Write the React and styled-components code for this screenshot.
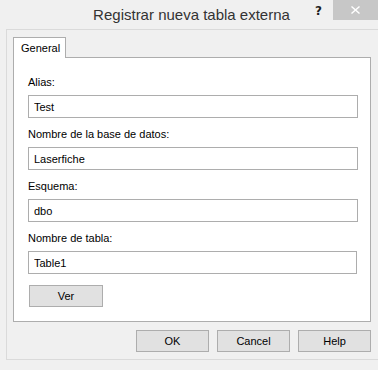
import React, { useState } from 'react';
import styled, { createGlobalStyle } from 'styled-components';

const GlobalStyle = createGlobalStyle`
  html, body {
    margin: 0;
    padding: 0;
    background: #f0f0f0;
  }
  * {
    box-sizing: border-box;
  }
`;

const Window = styled.div`
  width: 378px;
  height: 370px;
  overflow: hidden;
  background: #f0f0f0;
  font-family: "Liberation Sans", Arial, sans-serif;
  font-size: 11px;
  color: #000;
`;

const TitleBar = styled.div`
  height: 29px;
  display: flex;
  align-items: flex-start;
`;

const Title = styled.div`
  flex: 1;
  padding-left: 80px;
  padding-top: 6px;
  text-align: center;
  font-size: 15px;
  line-height: 18px;
  color: #333;
`;

const HelpGlyph = styled.div`
  width: 30px;
  padding: 4px 0 0 12px;
  font-family: "DejaVu Sans", sans-serif;
  font-weight: bold;
  font-size: 12px;
  line-height: 14px;
  color: #1e1e1e;
`;

const CloseButton = styled.div`
  width: 45px;
  height: 20px;
  background: #c7c7c7;
  display: flex;
  align-items: center;
  justify-content: center;
`;

const Frame = styled.div`
  width: 373px;
  height: 331px;
  margin-left: 6px;
  border-top: 1px solid #dadada;
  border-left: 1px solid #dadada;
  border-bottom: 1px solid #dadada;
  padding: 7px 8px 0 6px;
  display: flex;
  flex-direction: column;
`;

const TabStrip = styled.div`
  display: flex;
`;

const Tab = styled.div`
  position: relative;
  z-index: 1;
  width: 53px;
  height: 21px;
  margin-bottom: -1px;
  background: #fff;
  border: 1px solid #adadad;
  border-bottom: none;
  padding: 3px 0 0 7px;
  line-height: 14px;
`;

const Panel = styled.div`
  width: 358px;
  height: 265px;
  background: #fff;
  border: 1px solid #adadad;
  padding: 17px 12px 0 14px;
  display: flex;
  flex-direction: column;
`;

const Field = styled.div`
  display: flex;
  flex-direction: column;
  gap: 5px;
  margin-bottom: 9px;
`;

const Label = styled.label`
  line-height: 15px;
`;

const Input = styled.input`
  width: ${p => p.$width || 330}px;
  height: 23px;
  border: 1px solid #adadad;
  padding: 0 0 0 5px;
  font-family: "Liberation Sans", Arial, sans-serif;
  font-size: 11px;
  color: #000;
  outline: none;
  background: #fff;
`;

const Button = styled.button`
  width: ${p => p.$width || 73}px;
  height: 22px;
  background: #e1e1e1;
  border: 1px solid #adadad;
  font-family: "Liberation Sans", Arial, sans-serif;
  font-size: 11px;
  color: #000;
  padding: 0;
`;

const VerButton = styled(Button)`
  margin: 2px 0 0 1px;
`;

const ButtonRow = styled.div`
  display: flex;
  justify-content: flex-end;
  gap: 8px;
  width: 358px;
  margin-top: 8px;
`;

const fields = [
  { label: 'Alias:', value: 'Test' },
  { label: 'Nombre de la base de datos:', value: 'Laserfiche' },
  { label: 'Esquema:', value: 'dbo' },
  { label: 'Nombre de tabla:', value: 'Table1', width: 329 },
];

const App = () => {
  const [values, setValues] = useState(fields.map(f => f.value));

  return (
    <Window>
      <GlobalStyle />
      <TitleBar>
        <Title>Registrar nueva tabla externa</Title>
        <HelpGlyph>?</HelpGlyph>
        <CloseButton>
          <svg width="9" height="8" viewBox="0 0 9 8">
            <path d="M0.5 0.5 L8.5 7.5 M8.5 0.5 L0.5 7.5" stroke="#fff" strokeWidth="1.4" />
          </svg>
        </CloseButton>
      </TitleBar>
      <Frame>
        <TabStrip>
          <Tab>General</Tab>
        </TabStrip>
        <Panel>
          {fields.map((f, i) => (
            <Field key={f.label}>
              <Label>{f.label}</Label>
              <Input
                $width={f.width}
                value={values[i]}
                onChange={e => setValues(values.map((v, j) => (j === i ? e.target.value : v)))}
              />
            </Field>
          ))}
          <VerButton $width={74}>Ver</VerButton>
        </Panel>
        <ButtonRow>
          <Button>OK</Button>
          <Button>Cancel</Button>
          <Button>Help</Button>
        </ButtonRow>
      </Frame>
    </Window>
  );
};

export default App;
